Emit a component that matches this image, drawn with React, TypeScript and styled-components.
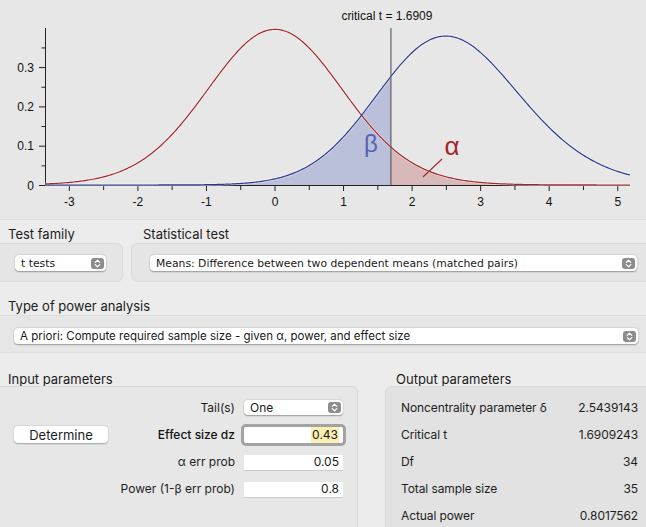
import React, { useMemo } from 'react';
import styled, { createGlobalStyle } from 'styled-components';

const GlobalStyle = createGlobalStyle`
  html, body {
    margin: 0;
    padding: 0;
    background: #ececec;
  }
  body {
    font-family: Inter, "Liberation Sans", sans-serif;
    color: #1f1f1f;
  }
`;

// chart geometry
const X0 = 275;
const XS = 68.55;
const Y0 = 185;
const YS = 393;
const T_MIN = (45 - X0) / XS;
const T_MAX = (630 - X0) / XS;
const CRIT = 1.6909;
const DELTA = 2.5439143;
const DF = 34;

const px = (t: number) => X0 + XS * t;
const py = (d: number) => Y0 - YS * d;

const lgamma = (x: number): number => {
    const c = [0.99999999999980993, 676.5203681218851, -1259.1392167224028, 771.32342877765313,
        -176.61502916214059, 12.507343278686905, -0.13857109526572012, 9.9843695780195716e-6,
        1.5056327351493116e-7];
    x -= 1;
    let a = c[0];
    const t = x + 7.5;
    for (let i = 1; i < 9; i++) a += c[i] / (x + i);
    return 0.5 * Math.log(2 * Math.PI) + (x + 0.5) * Math.log(t) - t + Math.log(a);
};

// (noncentral) t density by integrating over the chi scale factor
const tDensity = (t: number, nu: number, delta: number) => {
    const lg = lgamma(nu / 2) + (nu / 2) * Math.log(2);
    const n = 300, a = 0.25, b = 2.0, h = (b - a) / n;
    let sum = 0;
    for (let i = 0; i <= n; i++) {
        const s = a + i * h;
        const v = nu * s * s;
        const logg = Math.log(2 * nu * s) + (nu / 2 - 1) * Math.log(v) - v / 2 - lg;
        const z = t * s - delta;
        const w = i === 0 || i === n ? 0.5 : 1;
        sum += w * s * Math.exp(logg - (z * z) / 2);
    }
    return (sum * h) / Math.sqrt(2 * Math.PI);
};

const curve = (delta: number, from: number, to: number) => {
    const pts: [number, number][] = [];
    const steps = Math.ceil((to - from) / 0.02);
    for (let i = 0; i <= steps; i++) {
        const t = from + ((to - from) * i) / steps;
        pts.push([px(t), py(tDensity(t, DF, delta))]);
    }
    return pts;
};

const line = (pts: [number, number][]) =>
    pts.map((p, i) => `${i ? 'L' : 'M'}${p[0].toFixed(2)} ${p[1].toFixed(2)}`).join(' ');

const area = (pts: [number, number][]) =>
    `M${pts[0][0].toFixed(2)} ${Y0} ` + pts.map(p => `L${p[0].toFixed(2)} ${p[1].toFixed(2)}`).join(' ') +
    ` L${pts[pts.length - 1][0].toFixed(2)} ${Y0} Z`;

const Page = styled.div`
    width: 646px;
    height: 527px;
    overflow: hidden;
    background: #ececec;
    display: flex;
    flex-direction: column;
`;

const ChartArea = styled.div`
    height: 219px;
    background: #e7e7e7;
    border-bottom: 1px solid #dedede;
    flex: none;
    svg {
        display: block;
        font-family: "Liberation Sans", Arial, sans-serif;
    }
`;

const TopRow = styled.div`
    display: flex;
    gap: 8px;
    margin: 0 -8px;
`;

const Group = styled.div<{ $width?: number }>`
    display: flex;
    flex-direction: column;
    ${p => (p.$width ? `width: ${p.$width}px; flex: none;` : 'flex: 1;')}
`;

const Label = styled.div<{ $left: number; $top: number }>`
    font-size: 13px;
    line-height: 16px;
    padding: ${p => p.$top}px 0 0 ${p => p.$left}px;
    height: 16px;
    flex: none;
    color: #1c1c1c;
`;

const Box = styled.div<{ $pad: string }>`
    height: 39px;
    margin-top: 1px;
    background: #e5e5e5;
    border: 1px solid #dadada;
    border-radius: 6px;
    padding: ${p => p.$pad};
    box-sizing: border-box;
`;

const Band = styled.div`
    height: 38px;
    margin-top: 1px;
    background: #e6e6e6;
    border-top: 1px solid #dcdcdc;
    border-bottom: 1px solid #dcdcdc;
    padding: 12px 8px 0 14px;
    box-sizing: border-box;
    flex: none;
`;

const Popup = styled.div<{ $small?: boolean; $height?: number; $size?: number }>`
    height: ${p => p.$height ?? 16}px;
    background: #fff;
    border-radius: 4px;
    box-shadow: 0 0.5px 1.5px rgba(0, 0, 0, 0.35);
    display: flex;
    align-items: center;
    padding: 0 2px 0 6px;
    box-sizing: border-box;
    font-family: ${p => (p.$small ? '"DejaVu Sans", Verdana, sans-serif' : 'Inter, "Liberation Sans", sans-serif')};
    font-size: ${p => p.$size ?? (p.$small ? 10.8 : 12)}px;
    color: #1a1a1a;
    white-space: nowrap;
`;

const PopupText = styled.span`
    flex: 1;
    overflow: hidden;
`;

const Stepper = styled.span`
    width: 13px;
    height: 11px;
    border-radius: 3px;
    background: #8c8c8c;
    display: flex;
    align-items: center;
    justify-content: center;
    flex: none;
`;

const Arrows = () => (
    <Stepper>
        <svg width="7" height="9" viewBox="0 0 7 9">
            <path d="M1.2 3.4 L3.5 1.2 L5.8 3.4 M1.2 5.6 L3.5 7.8 L5.8 5.6" fill="none" stroke="#fff" strokeWidth="1.2" strokeLinecap="round" strokeLinejoin="round" />
        </svg>
    </Stepper>
);

const Bottom = styled.div`
    display: flex;
    margin: 0 -10px 0 -8px;
    flex: 1;
`;

const Panel = styled.div<{ $dark?: boolean; $inset?: number }>`
    background: ${p => (p.$dark ? '#e2e2e2' : '#e7e7e7')};
    border: 1px solid #d9d9d9;
    border-radius: 6px 6px 0 0;
    border-bottom: none;
    margin: -1px 0 0 ${p => p.$inset ?? 0}px;
    flex: 1;
    box-sizing: border-box;
`;

const PanelCol = styled.div<{ $width?: number }>`
    display: flex;
    flex-direction: column;
    ${p => (p.$width ? `width: ${p.$width}px; flex: none;` : 'flex: 1;')}
`;

const InputGrid = styled.div`
    display: grid;
    grid-template-columns: 94px 118px 99px;
    grid-auto-rows: 27px;
    column-gap: 9px;
    padding: 7px 0 0 21px;
    align-items: center;
`;

const FieldLabel = styled.div<{ $strong?: boolean }>`
    grid-column: 2;
    text-align: right;
    font-size: 12px;
    font-weight: ${p => (p.$strong ? 500 : 400)};
    color: ${p => (p.$strong ? '#111' : '#1e1e1e')};
    white-space: nowrap;
`;

const Field = styled.div<{ $focus?: boolean }>`
    grid-column: 3;
    height: 16px;
    background: #fff;
    box-shadow: ${p => (p.$focus ? '0 0 0 3px #a3a3a3' : 'inset 0 0.5px 0 #cfcfcf, 0 0.5px 0.5px rgba(0,0,0,0.12)')};
    border-radius: ${p => (p.$focus ? 2 : 0)}px;
    font-size: 12px;
    line-height: 16px;
    text-align: right;
    padding-right: 4px;
    box-sizing: border-box;
    color: #1a1a1a;
`;

const Selected = styled.span`
    background: #fbefb2;
    display: inline-block;
    padding: 0 1px;
`;

const Button = styled.button`
    grid-column: 1;
    grid-row: 2;
    height: 17px;
    border: none;
    background: #fff;
    border-radius: 4px;
    box-shadow: 0 0.5px 1.5px rgba(0, 0, 0, 0.3);
    font-family: Inter, "Liberation Sans", sans-serif;
    font-size: 13px;
    color: #1c1c1c;
    padding: 0;
`;

const OutList = styled.div`
    padding: 7px 17px 0 15px;
    display: flex;
    flex-direction: column;
`;

const OutRow = styled.div`
    height: 27px;
    display: flex;
    align-items: center;
    justify-content: space-between;
    font-size: 12px;
    letter-spacing: -0.1px;
    color: #1e1e1e;
`;

const Chart = () => {
    const red = useMemo(() => curve(0, T_MIN, T_MAX), []);
    const blue = useMemo(() => curve(DELTA, T_MIN, T_MAX), []);
    const blueFill = useMemo(() => curve(DELTA, T_MIN, CRIT), []);
    const redFill = useMemo(() => curve(0, CRIT, T_MAX), []);
    const xTicks = [];
    for (let t = -3; t <= 5; t++) xTicks.push(t);
    const halfTicks = [];
    for (let t = -2.5; t <= 5; t += 1) halfTicks.push(t);

    return (
        <svg width="646" height="219" viewBox="0 0 646 219">
            <path d={area(blueFill)} fill="#bac0d9" />
            <path d={area(redFill)} fill="#d8b9b9" />
            {/* axes */}
            <line x1="45.5" y1="28" x2="45.5" y2="185.5" stroke="#222" strokeWidth="1" />
            <line x1="45" y1="185.5" x2="630" y2="185.5" stroke="#222" strokeWidth="1" />
            {[0, 0.1, 0.2, 0.3].map(v => (
                <g key={v}>
                    <line x1="39" x2="45" y1={py(v) + 0.5} y2={py(v) + 0.5} stroke="#222" />
                    <text x="34" y={py(v) + 4.5} fontSize="12" textAnchor="end" fill="#111">{v === 0 ? '0' : v.toFixed(1)}</text>
                </g>
            ))}
            {[0.05, 0.15, 0.25, 0.35].map(v => (
                <line key={v} x1="41.5" x2="45" y1={py(v) + 0.5} y2={py(v) + 0.5} stroke="#222" />
            ))}
            {xTicks.map(t => (
                <g key={t}>
                    <line x1={px(t)} x2={px(t)} y1="185" y2="191" stroke="#222" />
                    <text x={px(t)} y="206" fontSize="12" textAnchor="middle" fill="#111">{t}</text>
                </g>
            ))}
            {halfTicks.map(t => (
                <line key={t} x1={px(t)} x2={px(t)} y1="185" y2="190" stroke="#222" />
            ))}
            {/* curves */}
            <path d={line(red)} fill="none" stroke="#fff" strokeOpacity="0.55" strokeWidth="2.6" />
            <path d={line(blue)} fill="none" stroke="#fff" strokeOpacity="0.55" strokeWidth="2.6" />
            <path d={line(red)} fill="none" stroke="#a3272b" strokeWidth="1.2" />
            <path d={line(blue)} fill="none" stroke="#2c3a90" strokeWidth="1.2" />
            {/* critical value */}
            <line x1={px(CRIT)} x2={px(CRIT)} y1="28" y2="185" stroke="#555" strokeWidth="1.1" />
            <text x={px(CRIT) - 4} y="20" fontSize="12" textAnchor="middle" fill="#111">critical t = 1.6909</text>
            <text x="371" y="152" fontSize="24" textAnchor="middle" fill="#5563b3">β</text>
            <text x="452" y="155" fontSize="26" textAnchor="middle" fill="#a3272b">α</text>
            <line x1="423" y1="177" x2="442" y2="159" stroke="#a3272b" strokeWidth="1.1" />
        </svg>
    );
};

const App = () => {
    return (
        <Page>
            <GlobalStyle />
            <ChartArea>
                <Chart />
            </ChartArea>
            <TopRow>
                <Group $width={131}>
                    <Label $left={16} $top={6}>Test family</Label>
                    <Box $pad="11px 16px 0 22px">
                        <Popup $small>
                            <PopupText>t tests</PopupText>
                            <Arrows />
                        </Popup>
                    </Box>
                </Group>
                <Group>
                    <Label $left={12} $top={6}>Statistical test</Label>
                    <Box $pad="11px 16px 0 18px">
                        <Popup $small>
                            <PopupText>Means: Difference between two dependent means (matched pairs)</PopupText>
                            <Arrows />
                        </Popup>
                    </Box>
                </Group>
            </TopRow>
            <Label $left={8} $top={16}>Type of power analysis</Label>
            <Band>
                <Popup $size={11.5}>
                    <PopupText>A priori: Compute required sample size - given α, power, and effect size</PopupText>
                    <Arrows />
                </Popup>
            </Band>
            <Bottom>
                <PanelCol $width={366}>
                    <Label $left={16} $top={18}>Input parameters</Label>
                    <Panel>
                        <InputGrid>
                            <FieldLabel>Tail(s)</FieldLabel>
                            <Popup $height={15} style={{ gridColumn: 3 }}>
                                <PopupText>One</PopupText>
                                <Arrows />
                            </Popup>
                            <Button>Determine</Button>
                            <FieldLabel $strong>Effect size dz</FieldLabel>
                            <Field $focus><Selected>0.43</Selected></Field>
                            <FieldLabel>α err prob</FieldLabel>
                            <Field>0.05</Field>
                            <FieldLabel>Power (1-β err prob)</FieldLabel>
                            <Field>0.8</Field>
                        </InputGrid>
                    </Panel>
                </PanelCol>
                <PanelCol>
                    <Label $left={38} $top={18}>Output parameters</Label>
                    <Panel $dark $inset={27}>
                        <OutList>
                            <OutRow><span>Noncentrality parameter δ</span><span>2.5439143</span></OutRow>
                            <OutRow><span>Critical t</span><span>1.6909243</span></OutRow>
                            <OutRow><span>Df</span><span>34</span></OutRow>
                            <OutRow><span>Total sample size</span><span>35</span></OutRow>
                            <OutRow><span>Actual power</span><span>0.8017562</span></OutRow>
                        </OutList>
                    </Panel>
                </PanelCol>
            </Bottom>
        </Page>
    );
};

export default App;
